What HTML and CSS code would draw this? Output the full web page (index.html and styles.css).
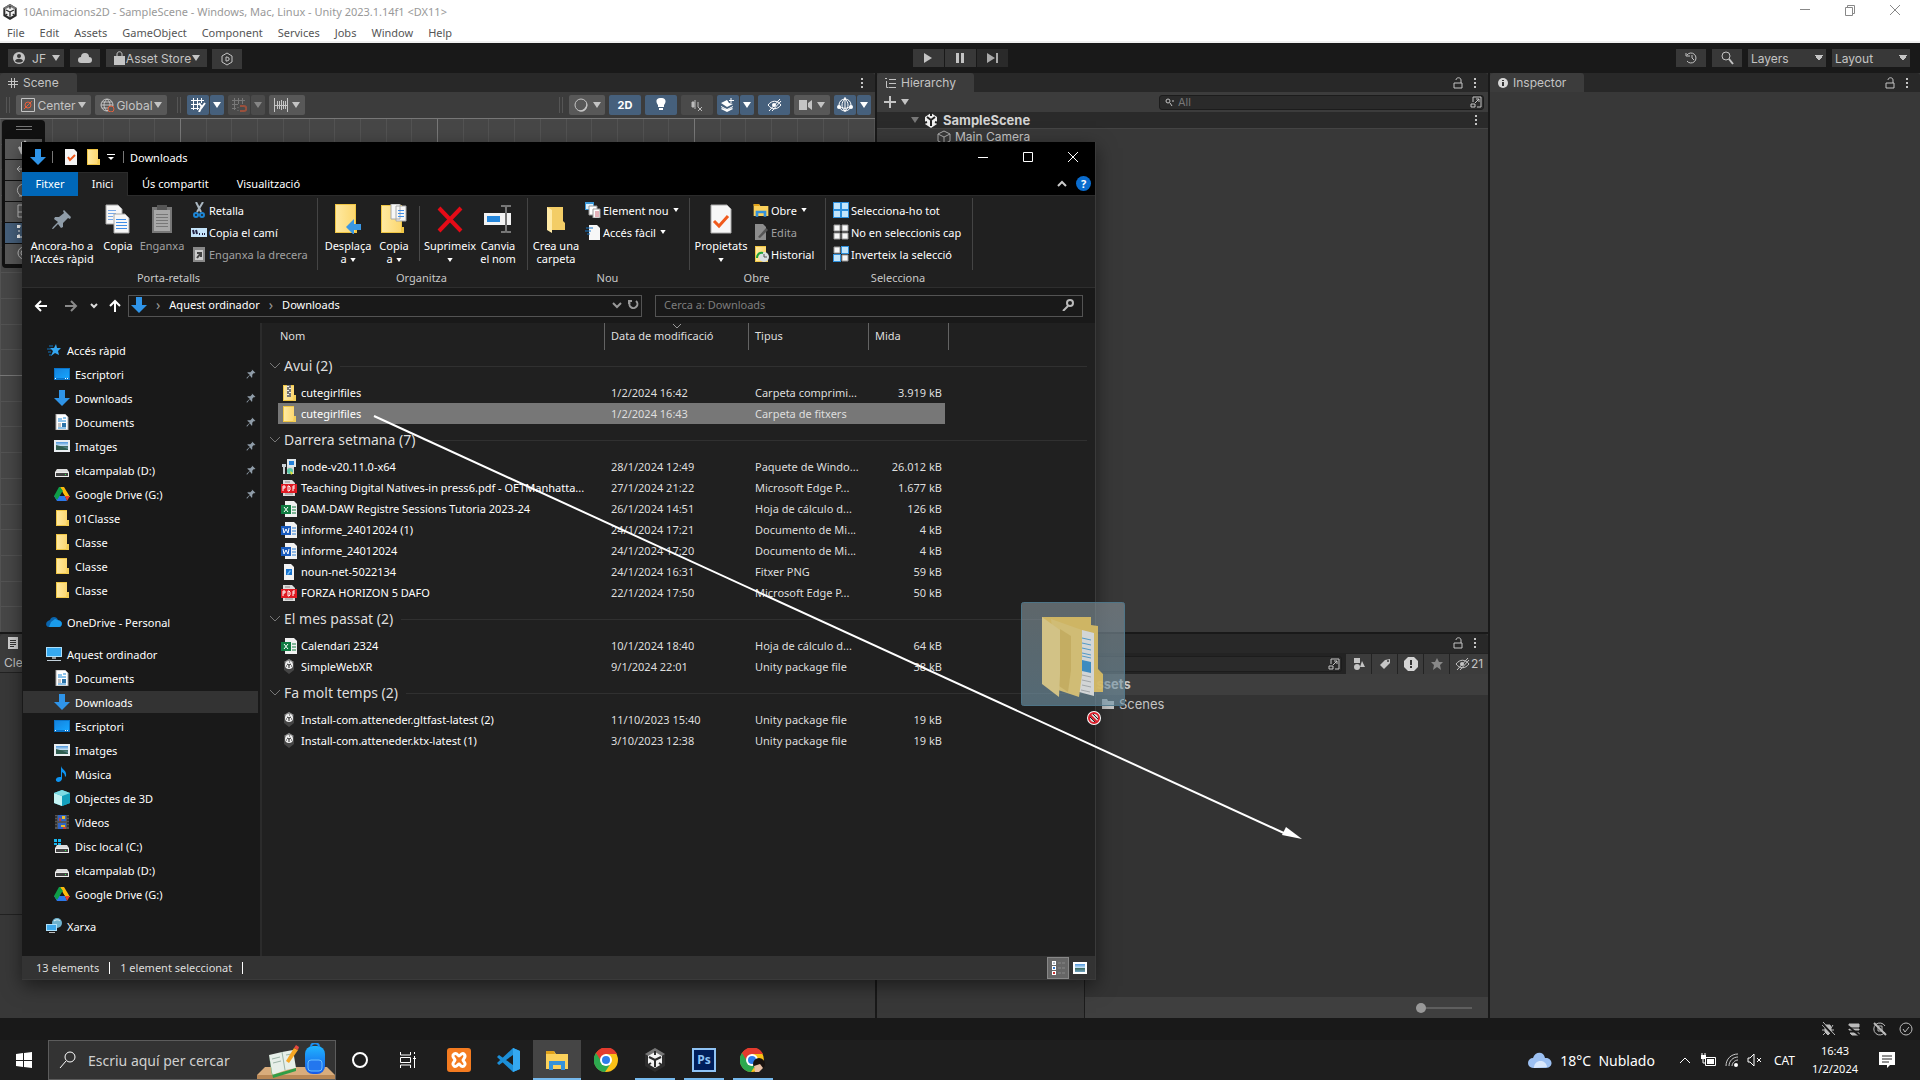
FILE: index.html
```html
<!DOCTYPE html>
<html lang="ca">
<head>
    <meta charset="UTF-8">
    <meta name="viewport" content="width=device-width, initial-scale=1.0">
    <title>Unity - Downloads</title>
    <link rel="stylesheet" href="styles.css">
</head>
<body>
    <!-- icones compartides -->
    <svg class="sprite" aria-hidden="true">
        <defs>
            <linearGradient id="gFolder" x1="0" x2="1"><stop offset="0" stop-color="#ffe9a0"/><stop offset="1" stop-color="#fcd770"/></linearGradient>
            <linearGradient id="gBlue" x1="0" y1="0" x2="1" y2="1"><stop offset="0" stop-color="#1583dd"/><stop offset="1" stop-color="#15a5ff"/></linearGradient>
            <linearGradient id="gSky" x1="0" y1="0" x2="0" y2="1"><stop offset="0" stop-color="#4e96dc"/><stop offset=".5" stop-color="#cfe6f5"/><stop offset=".55" stop-color="#3f6d63"/><stop offset="1" stop-color="#6fa3c4"/></linearGradient>
            <linearGradient id="gPack" x1="0" y1="0" x2="0" y2="1"><stop offset="0" stop-color="#20b4ff"/><stop offset="1" stop-color="#1558e8"/></linearGradient>
        </defs>
        <symbol id="down" viewBox="0 0 16 16"><path d="M5 0h6v8h5l-8 8-8-8h5z" fill="#2f94e8"/></symbol>
        <symbol id="folder" viewBox="0 0 16 16"><path d="M2 0h11v11h2v5H2z" fill="#f0c645"/><path d="M3 1h10v14H3z" fill="url(#gFolder)"/><path d="M13 10h2v6h-3z" fill="#f3cd57"/></symbol>
        <symbol id="zip" viewBox="0 0 16 16"><use href="#folder"/><path d="M6 0h4v12H6z" fill="#777"/><path d="M6 1h2v1H6zm2 2h2v1H8zM6 5h2v1H6zm2 2h2v1H8zM6 9h2v1H6z" fill="#eee"/></symbol>
        <symbol id="docIcon" viewBox="0 0 16 16"><path d="M2 0h9l3 3v13H2z" fill="#fff" stroke="#aaa"/><path d="M4 5h4M9 4h3M4 7h8M4 14h8" stroke="#1b87d6"/><path d="M4 10h3M4 12h3" stroke="#888"/><path d="M8 9h4v4H8z" fill="#2c73a8"/></symbol>
        <symbol id="pic" viewBox="0 0 16 16"><path d="M0 2h16v12H0z" fill="#e9eef2"/><path d="M2 4h12v8H2z" fill="url(#gSky)"/><path d="M2 7l4 1 8 3v1H2z" fill="#2f5d50"/></symbol>
        <symbol id="desk" viewBox="0 0 16 16"><path d="M0 2h16v12H0z" fill="#0a74c9"/><path d="M1 3h14v9H1z" fill="url(#gBlue)"/><path d="M1 12h1v1H1zm10 0h1v1h-1zm2 0h1v1h-1z" fill="#fff"/></symbol>
        <symbol id="drive" viewBox="0 0 16 16"><path d="M3 7h10l2 3H1z" fill="#dcdcdc"/><path d="M1 10h14v5H1z" fill="#ededed"/><path d="M2 11h12v3H2z" fill="#444"/><path d="M11 12h1v1h-1z" fill="#2ff04a"/></symbol>
        <symbol id="driveC" viewBox="0 0 16 16"><use href="#drive"/><path d="M0 1h3v3H0zm4 0h3v3H4zM0 5h3v2H0zm4 0h3v2H4z" fill="#16b6ee"/></symbol>
        <symbol id="gdrive" viewBox="0 0 16 16"><path d="M6 1h4l6 10h-5z" fill="#fdbb0c"/><path d="M5 10h6l-2 5H3L0 10z" fill="#2c78ea"/><path d="M0 10L5 1h1l3 4-6 9z" fill="#0f9d48"/><path d="M3 15l3-5h5l2 5z" fill="#2c78ea"/><path d="M11 10h5l-3 5z" fill="#e8402f"/><path d="M6 10h5L8 6z" fill="#191919"/></symbol>
        <symbol id="pin" viewBox="0 0 16 16"><path d="M10 1l5 5-1 1-1-1-3 3v4l-1 1-3-4-4 5H1v-1l5-5-4-3 1-1h4l3-3-1-1z" fill="#8f9ca8"/></symbol>
        <symbol id="music" viewBox="0 0 16 16"><path d="M7 0c1 4 6 4 5 10l-1 1c0-4-2-4-3-5v7c-1 4-7 4-6 0 1-2 3-2 5-2z" fill="#0d94f2"/></symbol>
        <symbol id="cube3" viewBox="0 0 16 16"><path d="M8 0l8 3v10l-8 3-8-3V3z" fill="#28b9cd"/><path d="M0 3l8 3v10l-8-3z" fill="#c4f3f3"/><path d="M8 6l8-3v10l-8 3z" fill="#12a0bd"/><path d="M8 0l8 3-8 3-8-3z" fill="#7ddbe4"/></symbol>
        <symbol id="video" viewBox="0 0 16 16"><path d="M1 1h14v14H1z" fill="#555"/><path d="M2 2v12M14 2v12" stroke="#111" stroke-dasharray="2 1"/><path d="M4 1h8v6H4zM4 9h8v6H4z" fill="#2f63c4"/><path d="M8 2h3v3H8zM7 11h4v2H7z" fill="#eabc2b"/><path d="M5 4h2v3H5zM9 13h3v2H9z" fill="#c13f3a"/></symbol>
        <symbol id="pc" viewBox="0 0 16 16"><path d="M0 1h16v10H0z" fill="#aee0fb"/><path d="M1 2h14v8H1z" fill="#36a9f0"/><path d="M6 11h4v2H6z" fill="#999"/><path d="M1 14h14v1H1z" fill="#c4d2dc"/></symbol>
        <symbol id="net" viewBox="0 0 16 16"><circle cx="11" cy="5" r="5" fill="#6fb3cf"/><path d="M8 3c3-2 5-1 6 0" stroke="#e6f7fb" fill="none"/><path d="M0 6h11v7H0z" fill="#aee0fb"/><path d="M1 7h9v5H1z" fill="#3fa9ea"/><path d="M3 14h6v1H3z" fill="#bbb"/></symbol>
        <symbol id="star" viewBox="0 0 16 16"><path d="M10 2l1 4h4l-3 3 1 4-4-2-4 3 2-5-3-3h4z" fill="#34a7f2"/><path d="M3 4h4M1 7h4M2 10h3M3 13h3" stroke="#1175bd"/></symbol>
        <symbol id="onedrive" viewBox="0 0 16 16"><path d="M4 6c1-4 7-4 8 0 5 0 5 7 1 7H3c-4 0-4-6 1-7z" fill="#0a64ad"/><path d="M5 8l4-3 5 2c3 1 2 6-1 6H3z" fill="#1a9bea"/></symbol>
        <symbol id="unityPkg" viewBox="0 0 16 16"><path d="M8 0l5 3v8l-5 4-5-4V3z" fill="#454545"/><path d="M8 0l5 3-5 2-5-2z" fill="#8d8d8d"/><circle cx="8" cy="6" r="4" fill="#eee"/><path d="M8 6v3M8 6L6 5M8 6l2-1" stroke="#222"/><path d="M5 7h1M10 7h1M8 3h1" stroke="#333"/></symbol>
        <symbol id="pdf" viewBox="0 0 16 16"><path d="M2 0h9l3 3v13H2z" fill="#ddd"/><path d="M4 2h5M4 14h8" stroke="#888"/><path d="M0 4h16v9H0z" fill="#df1a22"/><path d="M2 11V6h2v2H2M7 6v5h1l1-1V7L8 6zM12 11V6h2M12 8h2" stroke="#fff" fill="none"/></symbol>
        <symbol id="xls" viewBox="0 0 16 16"><path d="M4 0h9l3 3v13H4z" fill="#f1f1f1"/><path d="M11 6h4M11 9h4M11 12h4" stroke="#107c41"/><path d="M0 4h10v9H0z" fill="#107c41"/><path d="M3 6l4 5M7 6l-4 5" stroke="#fff"/></symbol>
        <symbol id="docx" viewBox="0 0 16 16"><path d="M4 0h9l3 3v13H4z" fill="#f1f1f1"/><path d="M11 6h4M11 9h4M11 12h4" stroke="#2b7cd3"/><path d="M0 4h10v9H0z" fill="#185abd"/><path d="M2 6l1 5 2-4 2 4 1-5" stroke="#fff" fill="none"/></symbol>
        <symbol id="msi" viewBox="0 0 16 16"><path d="M6 0h9v8H6z" fill="#dfe6ea"/><path d="M8 2h5v4H8z" fill="#2380d8"/><path d="M1 5h4v3H4v7H2V8H1z" fill="#c9d0d4"/><path d="M6 8h7v7H6z" fill="#d8d8d8"/><circle cx="9" cy="12" r="3" fill="#58c5a5"/><path d="M9 12l3 2-2 2z" fill="#e8e32c"/></symbol>
        <symbol id="png" viewBox="0 0 16 16"><path d="M3 0h7l3 3v13H3z" fill="#f3f3f3"/><path d="M5 5h6v6H5z" fill="#1673cf"/><path d="M6 10l3-4 1 1-3 4z" fill="#7cc0f5"/></symbol>
        <symbol id="tri" viewBox="0 0 8 6"><path d="M0 0h8L4 6z" fill="currentColor"/></symbol>
        <symbol id="lock" viewBox="0 0 10 12"><path d="M1 6h8v5H1zM3 3c0-3 5-3 5 0v3" fill="none" stroke="#c4c4c4"/></symbol>
        <symbol id="dots" viewBox="0 0 4 12"><path d="M1 1h2v2H1zm0 4h2v2H1zm0 4h2v2H1z" fill="#c4c4c4"/></symbol>
        <symbol id="popout" viewBox="0 0 12 12"><path d="M3 6V1h8v10H7M1 8h4v3H1zM5 7l4-4M6 3h3v3" fill="none" stroke="#c4c4c4"/></symbol>
        <symbol id="unity" viewBox="0 0 24 24"><path d="M12 0l10 6v12l-10 6-10-6V6z" fill="#2d2d2d"/><path d="M12 0l10 6-10 6L2 6z" fill="#777"/><path d="M12 4l7 4v8l-7 4-7-4V8z" fill="#f4f4f4"/><path d="M12 12v7M12 12L6 9M12 12l6-3" stroke="#2d2d2d" stroke-width="2"/><path d="M12 3v4M5 17l3-2M19 17l-3-2" stroke="#2d2d2d" stroke-width="2"/></symbol>
        <symbol id="chrome" viewBox="0 0 24 24"><circle cx="12" cy="12" r="12" fill="#fbc116"/><path d="M12 12L2 5a12 12 0 0 0 9 19l6-9z" fill="#2da94f"/><path d="M12 6h11a12 12 0 0 0-21-1l5 8z" fill="#e33b2e"/><circle cx="12" cy="12" r="6" fill="#fff"/><circle cx="12" cy="12" r="4" fill="#2e7de9"/></symbol>
        <symbol id="explorer" viewBox="0 0 24 24"><path d="M1 3h8l2 3h12v15H1z" fill="#fbd15b"/><path d="M1 3h8l1 3H1z" fill="#e0a21b"/><path d="M4 13h16v9h-4v-5H8v5H4z" fill="#3592da"/></symbol>
    </svg>

    <div class="unity">
        <header class="titlebar">
            <svg class="i16"><use href="#unity"/></svg>
            <span class="app-title">10Animacions2D - SampleScene - Windows, Mac, Linux - Unity 2023.1.14f1 &lt;DX11&gt;</span>
            <div class="win-buttons">
                <button aria-label="Minimitza"><svg width="12" height="12"><path d="M1 5.500h10" stroke="#888"/></svg></button>
                <button aria-label="Restaura"><svg width="12" height="12"><path d="M1.500 3.500h7v8h-7zM3.500 3V1.500h7v8H9" fill="none" stroke="#888"/></svg></button>
                <button aria-label="Tanca"><svg width="12" height="12"><path d="M1 1l10 10M11 1L1 11" stroke="#888"/></svg></button>
            </div>
        </header>
        <nav class="menubar">
            <a href="#">File</a><a href="#">Edit</a><a href="#">Assets</a><a href="#">GameObject</a><a href="#">Component</a><a href="#">Services</a><a href="#">Jobs</a><a href="#">Window</a><a href="#">Help</a>
        </nav>

        <div class="main-toolbar">
            <div class="tool-group">
                <button class="ubtn account"><svg width="14" height="14"><circle cx="7" cy="7" r="6" fill="#c4c4c4"/><circle cx="7" cy="5" r="2" fill="#383838"/><path d="M3 10c1-3 7-3 8 0-2 2-6 2-8 0z" fill="#383838"/></svg>JF<svg class="tri"><use href="#tri"/></svg></button>
                <button class="ubtn cloud" aria-label="Cloud"><svg width="16" height="12"><path d="M4 11a3 3 0 0 1 0-6 4 4 0 0 1 8 0 3 3 0 0 1 0 6z" fill="#c4c4c4"/></svg></button>
                <button class="ubtn store"><svg width="12" height="14"><path d="M1 5h11v9H1z" fill="#c4c4c4"/><path d="M4 6V3c0-3 5-3 5 0v3" fill="none" stroke="#c4c4c4"/></svg>Asset Store<svg class="tri"><use href="#tri"/></svg></button>
                <button class="ubtn cloud hex" aria-label="Package"><svg width="14" height="14"><path d="M7 1l5 3v6l-5 3-5-3V4zM6 5v4h1l2-1V6L7 5z" fill="none" stroke="#c4c4c4"/></svg></button>
            </div>
            <div class="tool-group play">
                <button class="ubtn" aria-label="Play"><svg width="10" height="12"><path d="M1 1l8 5-8 5z" fill="#c4c4c4"/></svg></button>
                <button class="ubtn" aria-label="Pause"><svg width="10" height="12"><path d="M1 1h3v10H1zM6 1h3v10H6z" fill="#c4c4c4"/></svg></button>
                <button class="ubtn step" aria-label="Step"><svg width="11" height="12"><path d="M0 1l8 5-8 5zM9 1h2v10H9z" fill="#aaa"/></svg></button>
            </div>
            <div class="tool-group end">
                <button class="ubtn cloud" aria-label="History"><svg width="14" height="14"><path d="M3 4a5 5 0 1 1 0 6M2 2v3h4M8 4v3l2 2" fill="none" stroke="#c4c4c4"/></svg></button>
                <button class="ubtn cloud" aria-label="Search"><svg width="14" height="14"><circle cx="6" cy="5" r="4" fill="none" stroke="#c4c4c4"/><path d="M9 8l4 5" stroke="#c4c4c4" stroke-width="2"/></svg></button>
                <select class="uselect" aria-label="Layers"><option>Layers</option></select>
                <select class="uselect" aria-label="Layout"><option>Layout</option></select>
            </div>
        </div>

        <div class="docks">
            <div class="dock-col">
                <section class="dock scene">
                    <div class="tabs"><h2 class="tab"><svg width="10" height="12"><path d="M3.500 1v10M6.500 1v10M0 4.500h10M0 7.500h10" stroke="#c4c4c4"/></svg>Scene</h2><span class="tab-tools"><svg class="dots"><use href="#dots"/></svg></span></div>
                    <div class="scene-tools">
                        <i class="grip"></i>
                        <button class="sbtn w75"><svg width="14" height="14"><path d="M.500.500h13v13H.500z" fill="none" stroke="#c4c4c4"/><circle cx="7" cy="7" r="3" fill="none" stroke="#e8613c"/><path d="M3 11l8-8" stroke="#e8613c"/></svg>Center<svg class="tri"><use href="#tri"/></svg></button>
                        <button class="sbtn w72"><svg width="15" height="14"><circle cx="7" cy="7" r="6" fill="none" stroke="#c4c4c4"/><path d="M7 1c-4 4-4 8 0 12M7 1c4 4 4 8 0 12M1 7h12M2 4h10M2 10h10" fill="none" stroke="#c4c4c4"/><circle cx="11" cy="11" r="3" fill="#585858" stroke="#e8613c"/></svg>Global<svg class="tri"><use href="#tri"/></svg></button>
                        <i class="grip far"></i>
                        <span class="split"><button class="sbtn on" aria-label="Grid"><svg width="15" height="14"><path d="M2.500 0v12M6.500 0v12M10.500 0v5M0 2.500h13M0 6.500h8M0 10.500h8" stroke="#fff" fill="none"/><path d="M8 5l3 4 3-4M11 8l-3 6" stroke="#fff" stroke-width="2" fill="none"/></svg></button><button class="sbtn on thin" aria-label="Grid options"><svg class="tri"><use href="#tri"/></svg></button></span>
                        <span class="split dim"><button class="sbtn" aria-label="Snap"><svg width="15" height="14"><path d="M2.500 0v12M6.500 0v6M10.500 0v6M0 2.500h13M0 6.500h6M0 10.500h4M6 9v1M6 12v1" stroke="#aaa" fill="none"/><path d="M8 8h4c3 0 3 5 0 5H8" stroke="#e8613c" stroke-width="2" fill="none"/></svg></button><button class="sbtn thin" aria-label="Snap options"><svg class="tri"><use href="#tri"/></svg></button></span>
                        <button class="sbtn w36" aria-label="Increment"><svg width="14" height="14"><path d="M.500 0v14M13.500 0v14M1 7.500h12M3.500 3v8M5.500 3v8M7.500 2v10M9.500 3v8M11.500 3v8" stroke="#c4c4c4"/></svg><svg class="tri"><use href="#tri"/></svg></button>
                        <div class="scene-right">
                            <i class="grip"></i>
                            <button class="sbtn w36" aria-label="Draw mode"><svg width="15" height="15"><circle cx="7" cy="7" r="6" fill="none" stroke="#c4c4c4"/><path d="M3 12a7 7 0 0 0 9-9c4 6-2 14-9 9z" fill="#c4c4c4"/></svg><svg class="tri"><use href="#tri"/></svg></button>
                            <button class="sbtn on w32 bold">2D</button>
                            <button class="sbtn on w32" aria-label="Light"><svg width="10" height="14"><path d="M5 0c6 0 5 5 3 7v2H2V7C0 5-1 0 5 0zM3 10h4v2H3z" fill="#fff"/></svg></button>
                            <button class="sbtn w32 dimmed" aria-label="Audio"><svg width="12" height="12"><path d="M1 3h2v5H1zM4 1v9M7 3v5M7 8l4 4M11 8l-4 4" stroke="#bbb" fill="#bbb"/></svg></button>
                            <span class="split"><button class="sbtn on" aria-label="Effects"><svg width="14" height="14"><path d="M0 5l6-3 2 3 4 1-6 3zM0 8l6 3 6-3v1l-6 3-6-3zM0 11l6 3 6-3-1-1-5 2-5-2z" fill="#fff"/><path d="M10 0v5M8 2.500h5" stroke="#fff"/></svg></button><button class="sbtn on thin" aria-label="Effects options"><svg class="tri"><use href="#tri"/></svg></button></span>
                            <button class="sbtn on w32" aria-label="Hidden"><svg width="15" height="12"><path d="M1 6c4-5 9-5 13 0-4 5-9 5-13 0zM2 12L13 0M5 12L14 2" fill="none" stroke="#fff"/><circle cx="7" cy="6" r="2" fill="#fff"/></svg></button>
                            <button class="sbtn w36" aria-label="Camera"><svg width="14" height="10"><path d="M0 0h8v10H0zM9 3l4-3v10L9 7z" fill="#c4c4c4"/></svg><svg class="tri"><use href="#tri"/></svg></button>
                            <span class="split"><button class="sbtn on" aria-label="Gizmos"><svg width="16" height="16"><circle cx="8" cy="8" r="6" fill="none" stroke="#fff"/><path d="M8 0v15M2 9c3 3 9 3 12 0M8 2C4 5 4 11 8 14M8 2c4 3 4 9 0 12" fill="none" stroke="#fff"/><circle cx="8" cy="2" r="1" fill="#fff"/><circle cx="2" cy="10" r="2" fill="#fff"/><circle cx="14" cy="10" r="2" fill="#fff"/></svg></button><button class="sbtn on thin" aria-label="Gizmos options"><svg class="tri"><use href="#tri"/></svg></button></span>
                        </div>
                    </div>
                    <div class="scene-view">
                        <svg class="grid-lines" width="100%" height="100%">
                            <defs><pattern id="grid" x="180" y="256" width="257" height="257" patternUnits="userSpaceOnUse">
                                <path d="M26.500 0v257M51.500 0v257M77.500 0v257M103.500 0v257M129.500 0v257M154.500 0v257M180.500 0v257M206.500 0v257M231.500 0v257M0 26.500h257M0 51.500h257M0 77.500h257M0 103.500h257M0 129.500h257M0 154.500h257M0 180.500h257M0 206.500h257M0 231.500h257" stroke="#535353"/>
                                <path d="M.500 0v257M0 .500h257" stroke="#787878"/>
                            </pattern></defs>
                            <rect width="100%" height="100%" fill="url(#grid)"/>
                        </svg>
                        <div class="tool-palette">
                            <i></i>
                            <button aria-label="Hand"><svg width="20" height="16"><path d="M8 14L5 7l3 3V2l2 6 1-7 2 7" stroke="#c4c4c4" stroke-width="2" fill="none"/></svg></button>
                            <button aria-label="Move"><svg width="20" height="16"><path d="M3 8h14M6 5L3 8l3 3M10 1v14" stroke="#c4c4c4" fill="none"/></svg></button>
                            <button aria-label="Rotate"><svg width="20" height="16"><path d="M8 14a6 6 0 1 1 6-2M5 14h4v-4" stroke="#c4c4c4" fill="none"/></svg></button>
                            <button aria-label="Scale"><svg width="20" height="16"><path d="M4 2h12v12H4zM4 9h6v5" stroke="#c4c4c4" fill="none"/></svg></button>
                            <button class="on" aria-label="Rect"><svg width="20" height="16"><path d="M5 2h10v11H5z" stroke="#fff" fill="none" stroke-dasharray="2 2"/><path d="M3 1h3v3H3zM3 11h3v3H3z" fill="#fff"/></svg></button>
                            <button aria-label="Transform"><svg width="20" height="16"><circle cx="10" cy="8" r="6" stroke="#c4c4c4" fill="none"/><circle cx="10" cy="8" r="3" stroke="#c4c4c4" fill="none"/></svg></button>
                        </div>
                    </div>
                </section>
                <section class="dock console">
                    <div class="tabs"><h2 class="tab narrow"><svg width="10" height="12"><path d="M0 0h10v12H0z" fill="#d0d0d0"/><path d="M2 3.500h6M2 5.500h6M2 7.500h6M2 9.500h4" stroke="#333"/></svg></h2></div>
                    <div class="console-tools"><button>Clear</button></div>
                    <div class="console-list"></div>
                    <div class="console-detail"></div>
                </section>
            </div>

            <div class="dock-col">
                <section class="dock hierarchy">
                    <div class="tabs"><h2 class="tab"><svg width="11" height="12"><path d="M0 1.500h2M4 2.500h7M1.500 4v6.500h2M4 6.500h7M4 10.500h7" stroke="#c4c4c4" fill="none"/></svg>Hierarchy</h2><span class="tab-tools"><svg class="lock"><use href="#lock"/></svg><svg class="dots"><use href="#dots"/></svg></span></div>
                    <div class="search-row">
                        <button class="plus" aria-label="Add"><svg width="12" height="12"><path d="M6 0v12M0 6h12" stroke="#c4c4c4" stroke-width="2"/></svg><svg class="tri"><use href="#tri"/></svg></button>
                        <label class="usearch"><svg width="10" height="10"><circle cx="4" cy="4" r="2" fill="none" stroke="#c4c4c4"/><path d="M6 6l2 3M8 4h2" stroke="#c4c4c4"/></svg><input type="text" placeholder="All" aria-label="Search hierarchy"><svg class="pop"><use href="#popout"/></svg></label>
                    </div>
                    <div class="tree-root"><svg class="tri gray"><use href="#tri"/></svg><svg width="14" height="16"><path d="M7 1l6 4v7l-6 4-6-4V5z" fill="#f0f0f0"/><path d="M7 8v6M7 8L3 5M7 8l4-3M7 0v4M0 11l3-1M14 11l-3-1" stroke="#222" stroke-width="2"/></svg><b>SampleScene</b><svg class="dots"><use href="#dots"/></svg></div>
                    <div class="tree-item"><svg width="14" height="14"><path d="M7 1l6 3v7l-6 3-6-3V4zM1 4l6 3 6-3M7 7v7" fill="none" stroke="#aaa"/></svg>Main Camera</div>
                </section>
                <section class="dock project">
                    <div class="tabs"><span class="tab-tools"><svg class="lock"><use href="#lock"/></svg><svg class="dots"><use href="#dots"/></svg></span></div>
                    <div class="project-tools">
                        <label class="usearch"><input type="text" aria-label="Search project"><svg class="pop"><use href="#popout"/></svg></label>
                        <button aria-label="By type"><svg width="12" height="14"><path d="M1 1h6v5H1zM12 10L9 4 7 10z" fill="#c4c4c4"/><circle cx="4" cy="10" r="3" fill="#c4c4c4"/></svg></button>
                        <button aria-label="By label"><svg width="12" height="12"><path d="M1 7l5-5 5-1v4l-6 6z" fill="#c4c4c4"/><circle cx="9" cy="3" r="1" fill="#383838"/></svg></button>
                        <button aria-label="Log"><svg width="14" height="14"><path d="M4 0h6l4 4v6l-4 4H4l-4-4V4z" fill="#d4d4d4"/><path d="M7 3v5M7 9v2" stroke="#333" stroke-width="2"/></svg></button>
                        <button aria-label="Favorite"><svg width="12" height="12"><path d="M6 0l2 4h4L9 7l1 5-4-3-4 3 1-5-3-3h4z" fill="#888"/></svg></button>
                        <button class="count"><svg width="15" height="12"><path d="M1 6c4-5 9-5 13 0-4 5-9 5-13 0zM2 12L13 0M5 12L14 2" fill="none" stroke="#c4c4c4"/><circle cx="7" cy="6" r="2" fill="#c4c4c4"/></svg>21</button>
                    </div>
                    <div class="project-body">
                        <div class="project-left"></div>
                        <div class="project-right">
                            <div class="crumb">Assets</div>
                            <div class="asset"><svg width="12" height="10"><path d="M0 0h5l1 2h6v8H0z" fill="#c4c4c4"/></svg>Scenes</div>
                            <div class="zoombar"><input type="range" min="0" max="100" value="0" aria-label="Icon size"></div>
                        </div>
                    </div>
                </section>
            </div>

            <div class="dock-col">
                <section class="dock inspector">
                    <div class="tabs"><h2 class="tab"><svg width="10" height="12"><circle cx="5" cy="6" r="5" fill="#d8d8d8"/><path d="M5 3v1M5 5v4" stroke="#333" stroke-width="2"/></svg>Inspector</h2><span class="tab-tools"><svg class="lock"><use href="#lock"/></svg><svg class="dots"><use href="#dots"/></svg></span></div>
                </section>
            </div>
        </div>

        <footer class="unity-status">
            <svg width="14" height="14"><path d="M5 3h4l1 3v4l-3 3-3-3V6zM1 3l3 3M1 8h3M2 13l3-3M12 3l-2 3M13 8h-3M12 13l-2-3" stroke="#bbb" fill="#bbb"/><path d="M1 1l12 13" stroke="#191919" stroke-width="2"/><path d="M2 0l12 13" stroke="#bbb"/></svg>
            <svg width="14" height="14"><path d="M2 2h10v3H2zM2 7h10v1H2zM3 11h9v2H5z" stroke="#bbb" fill="#bbb"/><path d="M1 4l12 10" stroke="#191919" stroke-width="2"/></svg>
            <svg width="14" height="14"><path d="M12 4a6 6 0 1 0 0 6M5 4h4v5H5z" stroke="#bbb" fill="none"/><path d="M1 1l12 12" stroke="#bbb" stroke-width="2"/></svg>
            <svg width="14" height="14"><circle cx="7" cy="7" r="6" stroke="#bbb" fill="none"/><path d="M4 7l2 3 4-5" stroke="#bbb" fill="none"/></svg>
        </footer>
    </div>

    <!-- finestra de l'explorador -->
    <div class="explorer">
        <header class="ex-title">
            <svg class="i16"><use href="#down"/></svg><i class="bar first"></i>
            <svg class="i16"><path d="M2 0h9l3 3v13H2z" fill="#f4f4f4"/><path d="M5 8l2 3 5-5" stroke="#f05a1c" stroke-width="2" fill="none"/></svg>
            <svg class="i16"><use href="#folder"/></svg>
            <svg class="quick" width="8" height="8"><path d="M0 1.500h8" stroke="#fff"/><path d="M1 4h6L4 7z" fill="#fff"/></svg><i class="bar"></i>
            <span>Downloads</span>
            <div class="win-buttons">
                <button aria-label="Minimitza"><svg width="12" height="12"><path d="M1 6.500h10" stroke="#fff"/></svg></button>
                <button aria-label="Maximitza"><svg width="12" height="12"><path d="M1.500 1.500h9v9h-9z" fill="none" stroke="#fff"/></svg></button>
                <button aria-label="Tanca"><svg width="12" height="12"><path d="M1 1l10 10M11 1L1 11" stroke="#fff"/></svg></button>
            </div>
        </header>
        <nav class="ex-tabs">
            <button class="file">Fitxer</button><button class="active">Inici</button><button>Ús compartit</button><button>Visualització</button>
            <span class="ex-help"><svg width="10" height="8"><path d="M1 6l4-4 4 4" stroke="#ccc" stroke-width="2" fill="none"/></svg><button aria-label="Ajuda">?</button></span>
        </nav>

        <div class="ribbon">
            <div class="rgroup g1">
                <div class="ritems">
                    <button class="big b74"><svg width="28" height="30"><path d="M16 6l7 7-1 2-2-1-5 5v4l-2 1-3-4-5 5H4l1-2 5-5-4-3 1-2h4l5-4-1-2z" fill="#8f9ca8"/></svg><span>Ancora-ho a</span><span>l'Accés ràpid</span></button>
                    <button class="big b38"><svg width="26" height="30"><path d="M1 1h12l4 4v15H1z" fill="#f7f7f7" stroke="#aaa"/><path d="M3 6.500h8M3 9.500h8M3 12.500h5M3 15.500h5" stroke="#78a9e8"/><path d="M9 10h11l4 4v15H9z" fill="#f7f7f7" stroke="#aaa"/><path d="M11 15.500h10M11 18.500h11M11 21.500h11M11 24.500h11" stroke="#3e8de8"/></svg><span>Copia</span></button>
                    <button class="big b50 off"><svg width="22" height="30"><path d="M1 3h20v26H1z" fill="#777"/><path d="M3 6h16v21H3z" fill="#a8a8a8"/><path d="M6 1h10v5H6z" fill="#555"/><path d="M5 10.500h12M5 13.500h12M5 16.500h12M5 19.500h12M5 22.500h12" stroke="#777"/></svg><span>Enganxa</span></button>
                    <div class="small-col">
                        <button><svg class="i16"><path d="M5 0l5 10M12 0L6 10" stroke="#a9b6c0" stroke-width="2"/><circle cx="5" cy="13" r="2" fill="none" stroke="#1c86d6" stroke-width="2"/><circle cx="11" cy="13" r="2" fill="none" stroke="#1c86d6" stroke-width="2"/></svg>Retalla</button>
                        <button><svg class="i16"><path d="M0 4h16v9H0z" fill="#c5e4fa"/><path d="M2 6l1 4M5 6l1 4M8 10h1M11 10h1M13 10h1" stroke="#224" stroke-width="2"/></svg>Copia el camí</button>
                        <button class="off"><svg class="i16"><path d="M2 1h12v15H2z" fill="#888"/><path d="M4 4h8v10H4z" fill="#ccc"/><path d="M6 12l4-5M6 7h4v4" stroke="#444" stroke-width="2" fill="none"/></svg>Enganxa la drecera</button>
                    </div>
                </div>
                <p>Porta-retalls</p>
            </div>
            <div class="rgroup g2">
                <div class="ritems">
                    <button class="big b54"><svg width="28" height="30"><path d="M1 0h21v23h1v6H1z" fill="#f0c645"/><path d="M2 1h19v27H2z" fill="url(#gFolder)"/><path d="M12 23l8-8v5h7v6h-7v5z" fill="#3a97e4"/></svg><span>Desplaça</span><span>a <svg class="rt"><use href="#tri"/></svg></span></button>
                    <button class="big b38"><svg width="28" height="30"><path d="M1 1h21v22h2v6H1z" fill="#f0c645"/><path d="M2 2h19v26H2z" fill="url(#gFolder)"/><path d="M11 0h9v15h-9zM16 2h10v15H16z" fill="#f7f7f7" stroke="#aaa"/><path d="M18 6.500h6M18 9.500h6M18 12.500h6" stroke="#3e8de8"/></svg><span>Copia</span><span>a <svg class="rt"><use href="#tri"/></svg></span></button>
                    <i class="rsep"></i>
                    <button class="big b52"><svg width="28" height="30"><path d="M3 4l22 23M25 4L3 27" stroke="#e50b17" stroke-width="4"/></svg><span>Suprimeix</span><span><svg class="rt"><use href="#tri"/></svg></span></button>
                    <button class="big b44"><svg width="30" height="30"><path d="M1 9h27v12H1z" fill="#f3f3f3"/><path d="M4 12h13v6H4z" fill="#2587dc"/><path d="M23 3v24M18 2h4l1 1 1-1h4M18 28h4l1-1 1 1h4" stroke="#777" stroke-width="2" fill="none"/></svg><span>Canvia</span><span>el nom</span></button>
                </div>
                <p>Organitza</p>
            </div>
            <div class="rgroup g3">
                <div class="ritems">
                    <button class="big b50"><svg width="22" height="30"><path d="M2 3h16v14l2 2v7H2z" fill="#f3cd66"/><path d="M2 3l5 3v23l-5-3z" fill="#ffeaa6"/></svg><span>Crea una</span><span>carpeta</span></button>
                    <div class="small-col">
                        <button><svg class="i16"><path d="M0 0h9v8H0z" fill="#3a97d8"/><path d="M1 2h7v5H1z" fill="#dff1fb"/><path d="M4 4h8v9H4z" fill="#fff" stroke="#999"/><path d="M8 7h7v9H8z" fill="#fff" stroke="#999"/><path d="M10 10h4M10 12h4M10 14h4" stroke="#c67"/></svg>Element nou<svg class="rt"><use href="#tri"/></svg></button>
                        <button><svg class="i16"><path d="M4 1h8l3 3v12H4z" fill="#f7f7f7"/><path d="M1 4h7M0 7h6M2 10h3" stroke="#1979ca"/></svg>Accés fàcil<svg class="rt"><use href="#tri"/></svg></button>
                    </div>
                </div>
                <p>Nou</p>
            </div>
            <div class="rgroup g4">
                <div class="ritems">
                    <button class="big b56"><svg width="22" height="30"><path d="M1 1h16l4 4v24H1z" fill="#f7f7f7" stroke="#aaa"/><path d="M4 17l5 5 9-10" stroke="#f05a1c" stroke-width="3" fill="none"/></svg><span>Propietats</span><span><svg class="rt"><use href="#tri"/></svg></span></button>
                    <div class="small-col">
                        <button><svg class="i16"><use href="#explorer"/></svg>Obre<svg class="rt"><use href="#tri"/></svg></button>
                        <button class="off"><svg class="i16"><path d="M2 0h8l3 3v13H2z" fill="#8d8d8d"/><path d="M5 13l8-9 2 2-8 8z" fill="#555"/></svg>Edita</button>
                        <button><svg class="i16"><use href="#folder"/><circle cx="11" cy="11" r="5" fill="#d8e0e4"/><path d="M11 8v3h3" stroke="#555" fill="none"/><path d="M4 12c0-4 3-6 6-5" stroke="#1ea53a" stroke-width="2" fill="none"/></svg>Historial</button>
                    </div>
                </div>
                <p>Obre</p>
            </div>
            <div class="rgroup g5">
                <div class="ritems">
                    <div class="small-col">
                        <button><svg class="i16"><path d="M0 0h16v16H0z" fill="#2d8fdc"/><path d="M1 1h6v6H1zM9 1h6v6H9zM1 9h6v6H1zM9 9h6v6H9z" fill="#c2e5fb"/></svg>Selecciona-ho tot</button>
                        <button><svg class="i16"><path d="M1 1h6v6H1zM9 1h6v6H9zM1 9h6v6H1zM9 9h6v6H9z" fill="#f7f7f7" stroke="#999"/></svg>No en seleccionis cap</button>
                        <button><svg class="i16"><path d="M1 1h6v6H1zM9 9h6v6H9z" fill="#f7f7f7" stroke="#999"/><path d="M8 0h8v8H8zM0 8h8v8H0z" fill="#2d8fdc"/><path d="M9 1h6v6H9zM1 9h6v6H1z" fill="#c2e5fb"/></svg>Inverteix la selecció</button>
                    </div>
                </div>
                <p>Selecciona</p>
            </div>
        </div>

        <div class="address-row">
            <div class="arrows">
                <button aria-label="Enrere"><svg width="14" height="12"><path d="M13 6H2M7 1L2 6l5 5" stroke="#fff" stroke-width="2" fill="none"/></svg></button>
                <button class="fwd" aria-label="Endavant"><svg width="14" height="12"><path d="M1 6h11M7 1l5 5-5 5" stroke="#8a8a8a" stroke-width="2" fill="none"/></svg></button>
                <button class="mini" aria-label="Recents"><svg width="8" height="6"><path d="M1 1l3 3 3-3" stroke="#ddd" stroke-width="2" fill="none"/></svg></button>
                <button class="up" aria-label="Amunt"><svg width="12" height="14"><path d="M6 13V2M1 7l5-5 5 5" stroke="#fff" stroke-width="2" fill="none"/></svg></button>
            </div>
            <div class="address">
                <svg class="i16"><use href="#down"/></svg><span class="chev">›</span><a href="#">Aquest ordinador</a><span class="chev">›</span><a href="#">Downloads</a>
                <div class="address-end">
                    <svg width="10" height="8"><path d="M1 2l4 4 4-4" stroke="#999" stroke-width="2" fill="none"/></svg>
                    <svg width="12" height="12"><path d="M4 2H1v3M2 3a4 4 0 1 0 6-1" stroke="#999" stroke-width="2" fill="none"/></svg>
                </div>
            </div>
            <label class="ex-search"><input type="text" placeholder="Cerca a: Downloads" aria-label="Cerca"><svg width="12" height="12"><circle cx="8" cy="4" r="3" stroke="#bbb" stroke-width="2" fill="none"/><path d="M6 7l-5 5" stroke="#bbb" stroke-width="2"/></svg></label>
        </div>

        <div class="ex-body">
            <aside class="nav-pane">
                <ul>
                    <li class="top"><svg class="i16"><use href="#star"/></svg>Accés ràpid</li>
                    <li><svg class="i16"><use href="#desk"/></svg>Escriptori<svg class="pin"><use href="#pin"/></svg></li>
                    <li><svg class="i16"><use href="#down"/></svg>Downloads<svg class="pin"><use href="#pin"/></svg></li>
                    <li><svg class="i16"><use href="#docIcon"/></svg>Documents<svg class="pin"><use href="#pin"/></svg></li>
                    <li><svg class="i16"><use href="#pic"/></svg>Imatges<svg class="pin"><use href="#pin"/></svg></li>
                    <li><svg class="i16"><use href="#drive"/></svg>elcampalab (D:)<svg class="pin"><use href="#pin"/></svg></li>
                    <li><svg class="i16"><use href="#gdrive"/></svg>Google Drive (G:)<svg class="pin"><use href="#pin"/></svg></li>
                    <li><svg class="i16"><use href="#folder"/></svg>01Classe</li>
                    <li><svg class="i16"><use href="#folder"/></svg>Classe</li>
                    <li><svg class="i16"><use href="#folder"/></svg>Classe</li>
                    <li><svg class="i16"><use href="#folder"/></svg>Classe</li>
                </ul>
                <ul>
                    <li class="top"><svg class="i16"><use href="#onedrive"/></svg>OneDrive - Personal</li>
                </ul>
                <ul>
                    <li class="top"><svg class="i16"><use href="#pc"/></svg>Aquest ordinador</li>
                    <li><svg class="i16"><use href="#docIcon"/></svg>Documents</li>
                    <li class="current"><svg class="i16"><use href="#down"/></svg>Downloads</li>
                    <li><svg class="i16"><use href="#desk"/></svg>Escriptori</li>
                    <li><svg class="i16"><use href="#pic"/></svg>Imatges</li>
                    <li><svg class="i16"><use href="#music"/></svg>Música</li>
                    <li><svg class="i16"><use href="#cube3"/></svg>Objectes de 3D</li>
                    <li><svg class="i16"><use href="#video"/></svg>Vídeos</li>
                    <li><svg class="i16"><use href="#driveC"/></svg>Disc local (C:)</li>
                    <li><svg class="i16"><use href="#drive"/></svg>elcampalab (D:)</li>
                    <li><svg class="i16"><use href="#gdrive"/></svg>Google Drive (G:)</li>
                </ul>
                <ul>
                    <li class="top"><svg class="i16"><use href="#net"/></svg>Xarxa</li>
                </ul>
            </aside>
            <div class="list-pane">
                <table class="files">
                    <colgroup><col class="c0"><col class="c1"><col class="c2"><col class="c3"><col class="c4"><col></colgroup>
                    <thead>
                        <tr><th></th><th>Nom</th><th class="sorted">Data de modificació<svg width="8" height="5"><path d="M0 0l4 4 4-4" stroke="#999" fill="none"/></svg></th><th>Tipus</th><th>Mida</th><th></th></tr>
                    </thead>
                    <tbody>
                        <tr class="group"><td colspan="6"><div><svg width="11" height="8"><path d="M1 1l5 5 5-5" stroke="#777" fill="none"/></svg>Avui (2)<hr></div></td></tr>
                        <tr><td></td><td><svg class="i16"><use href="#zip"/></svg>cutegirlfiles</td><td>1/2/2024 16:42</td><td>Carpeta comprimi...</td><td>3.919 kB</td><td></td></tr>
                        <tr class="selected"><td></td><td><svg class="i16"><use href="#folder"/></svg>cutegirlfiles</td><td>1/2/2024 16:43</td><td>Carpeta de fitxers</td><td></td><td></td></tr>
                        <tr class="group"><td colspan="6"><div><svg width="11" height="8"><path d="M1 1l5 5 5-5" stroke="#777" fill="none"/></svg>Darrera setmana (7)<hr></div></td></tr>
                        <tr><td></td><td><svg class="i16"><use href="#msi"/></svg>node-v20.11.0-x64</td><td>28/1/2024 12:49</td><td>Paquete de Windo...</td><td>26.012 kB</td><td></td></tr>
                        <tr><td></td><td><svg class="i16"><use href="#pdf"/></svg>Teaching Digital Natives-in press6.pdf - OETManhatta...</td><td>27/1/2024 21:22</td><td>Microsoft Edge P...</td><td>1.677 kB</td><td></td></tr>
                        <tr><td></td><td><svg class="i16"><use href="#xls"/></svg>DAM-DAW Registre Sessions Tutoria 2023-24</td><td>26/1/2024 14:51</td><td>Hoja de cálculo d...</td><td>126 kB</td><td></td></tr>
                        <tr><td></td><td><svg class="i16"><use href="#docx"/></svg>informe_24012024 (1)</td><td>24/1/2024 17:21</td><td>Documento de Mi...</td><td>4 kB</td><td></td></tr>
                        <tr><td></td><td><svg class="i16"><use href="#docx"/></svg>informe_24012024</td><td>24/1/2024 17:20</td><td>Documento de Mi...</td><td>4 kB</td><td></td></tr>
                        <tr><td></td><td><svg class="i16"><use href="#png"/></svg>noun-net-5022134</td><td>24/1/2024 16:31</td><td>Fitxer PNG</td><td>59 kB</td><td></td></tr>
                        <tr><td></td><td><svg class="i16"><use href="#pdf"/></svg>FORZA HORIZON 5 DAFO</td><td>22/1/2024 17:50</td><td>Microsoft Edge P...</td><td>50 kB</td><td></td></tr>
                        <tr class="group"><td colspan="6"><div><svg width="11" height="8"><path d="M1 1l5 5 5-5" stroke="#777" fill="none"/></svg>El mes passat (2)<hr></div></td></tr>
                        <tr><td></td><td><svg class="i16"><use href="#xls"/></svg>Calendari 2324</td><td>10/1/2024 18:40</td><td>Hoja de cálculo d...</td><td>64 kB</td><td></td></tr>
                        <tr><td></td><td><svg class="i16"><use href="#unityPkg"/></svg>SimpleWebXR</td><td>9/1/2024 22:01</td><td>Unity package file</td><td>38 kB</td><td></td></tr>
                        <tr class="group"><td colspan="6"><div><svg width="11" height="8"><path d="M1 1l5 5 5-5" stroke="#777" fill="none"/></svg>Fa molt temps (2)<hr></div></td></tr>
                        <tr><td></td><td><svg class="i16"><use href="#unityPkg"/></svg>Install-com.atteneder.gltfast-latest (2)</td><td>11/10/2023 15:40</td><td>Unity package file</td><td>19 kB</td><td></td></tr>
                        <tr><td></td><td><svg class="i16"><use href="#unityPkg"/></svg>Install-com.atteneder.ktx-latest (1)</td><td>3/10/2023 12:38</td><td>Unity package file</td><td>19 kB</td><td></td></tr>
                    </tbody>
                </table>
            </div>
        </div>
        <footer class="ex-status">
            <span>13 elements</span><span>1 element seleccionat</span>
            <div class="views">
                <button class="active" aria-label="Detalls"><svg width="18" height="16"><path d="M3 1h4v4H3zM3 6h4v4H3zM3 11h4v4H3z" fill="#fff"/><path d="M9 3h3M13 3h3M9 8h3M13 8h3M9 13h3M13 13h3" stroke="#888"/><path d="M4 3h2" stroke="#678"/><path d="M4 13h2" stroke="#c33" stroke-width="2"/><path d="M4 8h2" stroke="#37c" stroke-width="2"/></svg></button>
                <button class="thumbs" aria-label="Miniatures"><svg width="14" height="12"><path d="M0 0h14v12H0z" fill="#fff"/><path d="M2 2h10v8H2z" fill="url(#gSky)"/></svg></button>
            </div>
        </footer>
    </div>

    <!-- carpeta arrossegada, cursor i fletxa -->
    <svg class="ghost" width="104" height="104" viewBox="0 0 104 104">
        <defs><linearGradient id="gGhost" x1="0" y1="0" x2="0" y2="1"><stop offset="0" stop-color="#8e9ca4" stop-opacity=".6"/><stop offset="1" stop-color="#7397aa" stop-opacity=".65"/></linearGradient></defs>
        <rect x=".500" y=".500" width="103" height="103" rx="2" fill="url(#gGhost)" stroke="#51798c"/>
        <path d="M21 15h49v8l7 1v43l5 5v18H50L21 60z" fill="#d8bd68"/>
        <path d="M61 28l12 3v63l-15-4z" fill="#dcdfe0"/>
        <path d="M61 36l9 2M61 41l9 2M61 46l9 2M61 51l9 2M61 54l9 2" stroke="#55a0cf"/>
        <path d="M61 58l9 2v11l-9-2z" fill="#3f92c9"/>
        <path d="M61 73l9 2M61 78l9 2M61 83l9 2M60 88l9 2" stroke="#a8adb0"/>
        <path d="M30 17l31 11v45l-3 22-21-7z" fill="#dac57a"/>
        <path d="M39 27l11 7v34l-3 22-9-6z" fill="#cdb566"/>
        <path d="M21 15l18 13v44l-1 23-17-13z" fill="#dccb8c"/>
    </svg>
    <svg class="drag-arrow" width="930" height="426"><path d="M1 1l912 418" stroke="#fff" stroke-width="2"/><path d="M913 412l16 12-20-4z" fill="#fff"/></svg>
    <svg class="nodrop" width="14" height="14"><circle cx="7" cy="7" r="7" fill="#fff"/><circle cx="7" cy="7" r="5" fill="#ddd" stroke="#d9202c" stroke-width="2"/><path d="M3 4l7 7" stroke="#d9202c" stroke-width="2"/><path d="M6 3l5 5M3 6l5 5" stroke="#222"/></svg>

    <div class="taskbar">
        <button class="task" aria-label="Inici"><svg width="16" height="16"><path d="M0 2l7-1v7H0zM8 1l8-1v8H8zM0 9h7v6l-7-1zM8 9h8v7l-8-1z" fill="#fff"/></svg></button>
        <label class="task-search">
            <svg width="18" height="18"><circle cx="11" cy="6" r="5" stroke="#fff" fill="none"/><path d="M7 10l-6 7" stroke="#fff"/></svg>
            <input type="text" placeholder="Escriu aquí per cercar" aria-label="Cercar">
            <svg class="art" width="78" height="36"><path d="M8 24h62l8 8v4H0v-4z" fill="#d8ac7c"/><path d="M0 32h78v4H0z" fill="#b88755"/><path d="M12 12l13-3 11-2 3 18-10 2-14 5z" fill="#e7efe9"/><path d="M12 12l3 20 14-4 10-3v3l-23 7z" fill="#2f9e46"/><path d="M25 9l3 18M15 16l8-2M16 20l8-2M29 12l6-1" stroke="#9db4a8"/><path d="M29 18l8-13 4 2-9 13z" fill="#f6a623"/><path d="M37 5l2-3 3 2-1 3z" fill="#e5483f"/><rect x="48" y="3" width="20" height="28" rx="8" fill="url(#gPack)"/><path d="M54 4c0-5 8-5 8 0" stroke="#1d8ff0" stroke-width="2" fill="none"/><rect x="51" y="17" width="14" height="11" rx="3" fill="#2377ee" stroke="#68c0ff"/></svg>
        </label>
        <button class="task" aria-label="Cortana"><svg width="18" height="18"><circle cx="9" cy="9" r="7" stroke="#fff" stroke-width="2" fill="none"/></svg></button>
        <button class="task view" aria-label="Vista de tasques"><svg width="18" height="18"><path d="M1.500 1v3h10V1M1.500 17v-3h10v3M1.500 6.500h10v5h-10zM15.500 1v2M15.500 5v12M14 7.500h3" stroke="#fff" fill="none"/></svg></button>
        <button class="task app" aria-label="XAMPP"><svg width="24" height="24"><rect width="24" height="24" rx="3" fill="#f47b20"/><path d="M7 6c3-2 4 2 5 2s3-4 5-2c3 3-1 5-1 6s4 4 1 6-4-2-5-2-3 4-5 2c-3-2 1-5 1-6S4 8 7 6z" fill="none" stroke="#fff" stroke-width="3"/></svg></button>
        <button class="task app" aria-label="Code"><svg width="24" height="24"><path d="M17 0l7 3v18l-7 3L1 9l2-2 14 10V7L3 17l-2-2z" fill="#1c8fd8"/><path d="M17 0l7 3v18l-7 3z" fill="#34a9f2"/></svg></button>
        <button class="task app current" aria-label="Explorador"><svg width="24" height="24"><use href="#explorer"/></svg></button>
        <button class="task app" aria-label="Chrome"><svg width="24" height="24"><use href="#chrome"/></svg></button>
        <button class="task app open" aria-label="Unity"><svg width="24" height="24"><use href="#unity"/></svg></button>
        <button class="task app open" aria-label="Photoshop"><span class="ps">Ps</span></button>
        <button class="task app open" aria-label="Chrome perfil"><svg width="26" height="24"><use href="#chrome" width="24" height="24"/><circle cx="19" cy="16" r="6" fill="#18120f"/><path d="M14 18l6-2 3 4-4 4h-4z" fill="#e9c0a4"/></svg></button>
        <div class="tray">
            <svg width="24" height="16"><path d="M5 16a5 5 0 0 1 0-10C7-1 16-1 17 6c8-1 9 10 1 10z" fill="#9cc0f2"/><path d="M6 16c0-9 12-9 13-1z" fill="#d9e8fc"/></svg>
            <span class="weather">18°C&nbsp; Nublado</span>
            <svg class="up" width="12" height="8"><path d="M1 7l5-5 5 5" stroke="#fff" fill="none"/></svg>
            <svg width="17" height="14"><path d="M5.500 4.500h10v8h-10z" stroke="#fff" fill="none"/><path d="M7 6h7v5H7zM1 2h5v4H1z" fill="#fff"/><path d="M2 0v2M5 0v2M3 6v4h2" stroke="#fff" fill="none"/></svg>
            <svg width="14" height="14"><path d="M1 13C1 6 6 1 13 1M4 13c0-5 4-9 9-9M7 13c0-3 3-6 6-6" stroke="#ccc" fill="none"/><circle cx="11" cy="12" r="2" fill="#fff"/></svg>
            <svg width="15" height="14"><path d="M1 5h2l4-4v12L3 9H1zM10 5l4 4M14 5l-4 4" stroke="#fff" fill="none"/></svg>
            <span class="lang">CAT</span>
            <div class="clock"><span>16:43</span><span>1/2/2024</span></div>
            <svg width="16" height="16"><path d="M0 0h16v13h-5l-3 3v-3H0z" fill="#fff"/><path d="M3 4h10M3 7h10M3 10h7" stroke="#222"/></svg>
        </div>
    </div>
</body>
</html>
```

FILE: styles.css
```css
*{
    box-sizing: border-box;
}
body{
    margin: 0;
    height: 100vh;
    display: flex;
    flex-direction: column;
    overflow: hidden;
    background: #191919;
    font-family: "Noto Sans", "Open Sans", sans-serif;
    font-size: 11px;
    color: #fff;
}
button, input, select{
    font: inherit;
    color: inherit;
    background: none;
    border: 0;
    padding: 0;
    margin: 0;
    outline: none;
}
a{
    color: inherit;
    text-decoration: none;
}
ul, p, h2{
    margin: 0;
    padding: 0;
    list-style: none;
    font-size: inherit;
    font-weight: normal;
}
svg{
    flex: none;
}
.sprite{
    position: absolute;
    width: 0;
    height: 0;
}
.i16{
    width: 16px;
    height: 16px;
}
.tri{
    width: 8px;
    height: 6px;
}
.lock{
    width: 10px;
    height: 12px;
}
.dots{
    width: 4px;
    height: 12px;
}
.pop{
    width: 12px;
    height: 12px;
}

/* unity */
.unity{
    flex: 1;
    min-height: 0;
    display: flex;
    flex-direction: column;
    font-family: Inter, "Liberation Sans", sans-serif;
    font-size: 12px;
    color: #c4c4c4;
}
.titlebar, .menubar{
    background: #fff;
    font-family: "Noto Sans", "Open Sans", sans-serif;
    font-size: 11px;
    display: flex;
    align-items: center;
}
.titlebar{
    height: 23px;
    padding-left: 2px;
    gap: 5px;
    color: #999;
}
.win-buttons{
    margin-left: auto;
    display: flex;
    align-self: stretch;
}
.win-buttons button{
    width: 45px;
    display: flex;
    align-items: center;
    justify-content: center;
}
.titlebar .win-buttons{
    padding: 0 3px 3px 0;
}
.menubar{
    height: 20px;
    padding-left: 7px;
    gap: 15px;
    color: #555;
    border-bottom: 2px solid #f0f0f0;
}
.main-toolbar{
    height: 30px;
    flex: none;
    display: grid;
    grid-template-columns: 1fr auto 1fr;
    padding: 6px 8px;
}
.tool-group{
    display: flex;
    gap: 6px;
}
.ubtn{
    height: 18px;
    background: #383838;
    display: flex;
    align-items: center;
    justify-content: center;
    gap: 1px;
}
.account{
    width: 56px;
    gap: 6px;
}
.cloud{
    width: 30px;
}
.hex{
    height: 20px;
    margin-left: -1px;
}
.store{
    width: 101px;
}
.play{
    gap: 1px;
}
.play .ubtn{
    width: 31px;
}
.play .step{
    background: #2a2a2a;
}
.end{
    justify-content: flex-end;
    padding-right: 2px;
}
.uselect{
    width: 78px;
    height: 18px;
    padding: 0 3px;
    appearance: none;
    background: conic-gradient(from -37deg at 50% 100%, #c4c4c4 74deg, transparent 0) right 3px center / 8px 6px no-repeat #383838;
}
.docks{
    flex: 1;
    min-height: 0;
    display: grid;
    grid-template-columns: 875fr 611fr 430fr;
    gap: 2px;
}
.dock-col{
    display: flex;
    flex-direction: column;
    gap: 2px;
    min-width: 0;
    min-height: 0;
}
.dock{
    background: #383838;
    display: flex;
    flex-direction: column;
    min-height: 0;
}
.scene, .hierarchy{
    flex: 558;
}
.console, .project{
    flex: 384;
}
.inspector{
    flex: 1;
}
.tabs{
    height: 19px;
    flex: none;
    background: #282828;
    display: flex;
    border-radius: 3px 3px 0 0;
}
.tab{
    display: flex;
    align-items: center;
    gap: 5px;
    padding: 0 18px 0 8px;
    background: #3c3c3c;
    border-radius: 3px 3px 0 0;
}
.tab.narrow{
    width: 90px;
}
.tab-tools{
    margin-left: auto;
    display: flex;
    align-items: center;
    gap: 10px;
    padding-right: 11px;
}
.scene-tools{
    height: 27px;
    flex: none;
    background: #3c3c3c;
    border-bottom: 1px solid #777;
    display: flex;
    align-items: center;
    padding: 0 4px 0 6px;
    gap: 4px;
}
.grip{
    width: 4px;
    height: 16px;
    border: solid #555;
    border-width: 0 1px;
    margin-right: 2px;
}
.grip.far{
    margin: 0 2px 0 6px;
}
.sbtn{
    height: 20px;
    background: #585858;
    border-radius: 2px;
    display: flex;
    align-items: center;
    justify-content: center;
    gap: 3px;
    white-space: nowrap;
}
.sbtn.on{
    background: #46607c;
    color: #fff;
}
.w75{
    width: 75px;
    gap: 2px;
}
.w72{
    width: 72px;
    gap: 1px;
}
.w36{
    width: 36px;
    gap: 4px;
}
.w32{
    width: 32px;
}
.bold{
    font-weight: bold;
    font-size: 11px;
}
.split{
    display: flex;
    gap: 1px;
}
.split .sbtn{
    width: 22px;
}
.split .thin{
    width: 14px;
}
.dim{
    opacity: .55;
}
.dimmed{
    background: #4a4a4a;
}
.scene-right{
    margin-left: auto;
    display: flex;
    align-items: center;
    gap: 4px;
}
.scene-view{
    flex: 1;
    position: relative;
    background: #474747;
    overflow: hidden;
}
.grid-lines{
    display: block;
}
.tool-palette{
    position: absolute;
    left: 2px;
    top: 1px;
    width: 43px;
    padding: 6px 3px 4px;
    background: #111;
    border-radius: 4px;
    display: flex;
    flex-direction: column;
    gap: 1px;
}
.tool-palette i{
    width: 16px;
    height: 4px;
    margin: 0 auto 8px;
    border: solid #777;
    border-width: 1px 0;
}
.tool-palette button{
    height: 20px;
    background: #585858;
}
.tool-palette .on{
    background: #46607c;
}
.console-tools{
    height: 20px;
    padding-left: 4px;
    background: #3c3c3c;
    border-bottom: 1px solid #222;
    display: flex;
}
.console-list{
    flex: 241;
    border-bottom: 1px solid #222;
}
.console-detail{
    flex: 103;
}
.search-row{
    height: 20px;
    flex: none;
    background: #3c3c3c;
    display: flex;
    align-items: center;
    justify-content: space-between;
    padding: 0 4px 0 7px;
}
.plus{
    display: flex;
    align-items: center;
    gap: 5px;
}
.usearch{
    width: 325px;
    height: 15px;
    background: #2a2a2a;
    border: 1px solid #1c1c1c;
    border-radius: 3px;
    display: flex;
    align-items: center;
    gap: 4px;
    padding: 0 1px 0 4px;
    color: #777;
}
.usearch input{
    flex: 1;
    min-width: 0;
    font-size: 11px;
}
.usearch input::placeholder{
    color: #777;
    opacity: 1;
}
.tree-root{
    height: 17px;
    flex: none;
    background: #2a2a2a;
    border-bottom: 1px solid #444;
    display: flex;
    align-items: center;
    gap: 5px;
    padding: 0 10px 0 34px;
    font-size: 13px;
    color: #d2d2d2;
}
.tree-root .dots{
    margin-left: auto;
}
.gray{
    color: #777;
}
.tree-item{
    height: 15px;
    display: flex;
    align-items: center;
    gap: 4px;
    padding-left: 60px;
}
.project-tools{
    height: 21px;
    flex: none;
    display: flex;
    align-items: center;
    gap: 1px;
    background: #232323;
    padding-top: 1px;
}
.project-tools .usearch{
    flex: 1;
    margin-right: 3px;
    height: 16px;
}
.project-tools button{
    width: 25px;
    align-self: stretch;
    background: #3c3c3c;
    display: flex;
    align-items: center;
    justify-content: center;
}
.project-tools .count{
    width: 38px;
    gap: 1px;
}
.project-body{
    flex: 1;
    min-height: 0;
    display: flex;
}
.project-left{
    width: 208px;
    border-right: 1px solid #1c1c1c;
}
.project-right{
    flex: 1;
    background: #333;
    display: flex;
    flex-direction: column;
    font-size: 13px;
}
.crumb{
    height: 21px;
    background: #3e3e3e;
    padding-left: 2px;
    line-height: 21px;
    font-weight: bold;
}
.asset{
    display: flex;
    align-items: center;
    gap: 5px;
    height: 18px;
    padding-left: 17px;
}
.zoombar{
    margin-top: auto;
    height: 21px;
    background: #3f3f3f;
    display: flex;
    align-items: center;
    justify-content: flex-end;
    padding-right: 16px;
}
.zoombar input{
    width: 56px;
    height: 10px;
    appearance: none;
}
.zoombar input::-webkit-slider-runnable-track{
    height: 2px;
    background: #5e5e5e;
}
.zoombar input::-webkit-slider-thumb{
    appearance: none;
    width: 10px;
    height: 10px;
    margin-top: -4px;
    border-radius: 50%;
    background: #999;
}
.unity-status{
    height: 22px;
    flex: none;
    display: flex;
    align-items: center;
    justify-content: flex-end;
    gap: 12px;
    padding-right: 7px;
}

/* explorer window */
.explorer{
    position: absolute;
    left: 22px;
    top: 142px;
    width: 1074px;
    height: 838px;
    background: #191919;
    border: solid #3a3a3a;
    border-width: 0 1px 1px 0;
    box-shadow: 0 6px 18px rgba(0, 0, 0, .5);
    display: flex;
    flex-direction: column;
}
.ex-title{
    height: 30px;
    background: #000;
    display: flex;
    align-items: center;
    padding-left: 8px;
    gap: 6px;
}
.ex-title .bar{
    width: 1px;
    height: 12px;
    background: #777;
}
.ex-title .first{
    margin-right: 4px;
}
.ex-title .quick{
    margin-right: 2px;
}
.ex-tabs{
    height: 24px;
    background: #000;
    border-bottom: 1px solid #2b2b2b;
    display: flex;
}
.ex-tabs button{
    height: 24px;
    padding: 0 14px 2px;
}
.ex-tabs .file{
    width: 56px;
    padding: 0 0 2px;
    background: #0067b8;
}
.ex-tabs .active{
    width: 50px;
    padding: 0 0 2px;
    background: #202020;
    border: solid #2b2b2b;
    border-width: 1px 1px 0 0;
}
.ex-help{
    margin-left: auto;
    display: flex;
    align-items: center;
    gap: 9px;
    padding-right: 4px;
}
.ex-help button{
    width: 15px;
    height: 15px;
    padding: 0;
    line-height: 15px;
    border-radius: 50%;
    background: #0a6cce;
    font-weight: bold;
}
.ribbon{
    height: 92px;
    background: #202020;
    border-bottom: 1px solid #2e2e2e;
    display: flex;
}
.rgroup{
    display: flex;
    flex-direction: column;
    justify-content: space-between;
    padding: 2px 0 2px 3px;
    background: linear-gradient(#444, #444) right 2px / 1px 72px no-repeat;
}
.rgroup p{
    text-align: center;
    line-height: 14px;
    padding-right: 6px;
    color: #c8c8c8;
}
.g1{
    width: 296px;
}
.g2{
    width: 210px;
}
.g3{
    width: 162px;
}
.g4{
    width: 136px;
}
.g5{
    width: 147px;
}
.ritems{
    display: flex;
}
.big{
    height: 70px;
    padding-top: 6px;
    display: flex;
    flex-direction: column;
    align-items: center;
    line-height: 13px;
    white-space: nowrap;
}
.big > svg{
    margin-bottom: 5px;
}
.big span{
    height: 13px;
}
.b38{
    width: 38px;
}
.b44{
    width: 44px;
}
.b50{
    width: 50px;
}
.b52{
    width: 52px;
}
.b54{
    width: 54px;
}
.b56{
    width: 56px;
}
.b74{
    width: 74px;
}
.off{
    color: #a0a0a0;
}
.rt{
    width: 6px;
    height: 4px;
    vertical-align: middle;
}
.rsep{
    width: 1px;
    height: 55px;
    margin: 8px 4px 0 6px;
    background: #4a4a4a;
}
.small-col{
    display: flex;
    flex-direction: column;
    padding: 1px 0 0 4px;
}
.small-col button{
    height: 22px;
    display: flex;
    align-items: center;
    gap: 2px;
    white-space: nowrap;
}
.small-col .rt{
    margin-left: 2px;
}
.address-row{
    height: 35px;
    display: flex;
    align-items: center;
    padding: 0 12px;
}
.arrows{
    width: 94px;
    display: flex;
    align-items: center;
}
.arrows button{
    width: 14px;
    height: 22px;
    display: flex;
    align-items: center;
    margin-right: 16px;
}
.arrows .fwd{
    margin-right: 12px;
}
.arrows .mini{
    width: 8px;
    margin-right: 11px;
}
.arrows .up{
    width: 12px;
    margin-right: 0;
}
.address{
    width: 514px;
    height: 22px;
    margin-right: 13px;
    border: 1px solid #535353;
    display: flex;
    align-items: center;
    gap: 9px;
    padding: 0 1px 2px 2px;
}
.chev{
    color: #999;
    font-size: 14px;
    line-height: 14px;
}
.address-end{
    margin-left: auto;
    display: flex;
    align-items: center;
    gap: 6px;
}
.ex-search{
    flex: 1;
    height: 22px;
    border: 1px solid #535353;
    display: flex;
    align-items: center;
    padding: 0 8px 2px;
}
.ex-search input{
    flex: 1;
}
.ex-search input::placeholder{
    color: #7d7d7d;
    opacity: 1;
}
.ex-body{
    flex: 1;
    min-height: 0;
    display: flex;
}
.nav-pane{
    width: 240px;
    border-right: 2px solid #2b2b2b;
    padding-top: 15px;
}
.nav-pane ul{
    margin-bottom: 8px;
}
.nav-pane li{
    height: 24px;
    margin: 0 2px 0 1px;
    padding: 0 2px 0 31px;
    display: flex;
    align-items: center;
    gap: 5px;
}
.nav-pane .top{
    padding-left: 23px;
}
.nav-pane .current{
    background: linear-gradient(#333, #333) center / 100% 22px no-repeat;
}
.pin{
    width: 10px;
    height: 10px;
    margin-left: auto;
}
.list-pane{
    flex: 1;
    background: #202020;
    padding-right: 8px;
}
.files{
    width: 100%;
    table-layout: fixed;
    border-collapse: separate;
    border-spacing: 0;
}
.c0{
    width: 16px;
}
.c1{
    width: 327px;
}
.c2{
    width: 144px;
}
.c3{
    width: 120px;
}
.c4{
    width: 80px;
}
.files th{
    height: 27px;
    padding: 0 0 3px 6px;
    text-align: left;
    font-weight: normal;
    color: #dedede;
    border-right: 1px solid #636363;
}
.files th:first-child, .files th:last-child{
    border: 0;
}
.files th:nth-child(2){
    padding-left: 2px;
}
.sorted{
    position: relative;
}
.sorted svg{
    position: absolute;
    top: 1px;
    left: 68px;
}
.files td{
    height: 21px;
    padding: 0 0 0 6px;
    line-height: 16px;
    white-space: nowrap;
    color: #dedede;
}
.files td:nth-child(2){
    padding-left: 3px;
    color: #fff;
}
.files td:nth-child(2) svg{
    float: left;
    margin-right: 4px;
}
.files td:nth-child(5){
    text-align: right;
    padding: 0 3px 0 0;
    border-right: 4px solid transparent;
    background-clip: padding-box;
}
.files .group td{
    height: 32px;
    padding: 0 0 0 7px;
}
.group div{
    display: flex;
    align-items: center;
    gap: 4px;
    font-size: 14px;
}
.group hr{
    flex: 1;
    height: 1px;
    margin: 0 0 0 4px;
    border: 0;
    background: #303030;
}
.selected td:nth-child(n+2):nth-child(-n+5){
    background-color: #777;
}
.ex-status{
    height: 23px;
    background: #333;
    display: flex;
    align-items: center;
    padding: 1px 6px 0 14px;
    color: #dedede;
}
.ex-status span{
    border-right: 1px solid #fff;
    line-height: 12px;
    padding-right: 10px;
    margin-right: 10px;
}
.views{
    margin-left: auto;
    display: flex;
    gap: 2px;
}
.views button{
    width: 22px;
    height: 22px;
    display: flex;
    align-items: center;
    justify-content: center;
}
.views .thumbs{
    width: 18px;
}
.views .active{
    background: #666;
    border: 1px solid #888;
}

/* drag overlay */
.ghost{
    position: absolute;
    left: 1021px;
    top: 602px;
    opacity: .95;
}
.drag-arrow{
    position: absolute;
    left: 373px;
    top: 415px;
}
.nodrop{
    position: absolute;
    left: 1087px;
    top: 711px;
}

/* taskbar */
.taskbar{
    height: 40px;
    flex: none;
    background: #1e1e1e;
    display: flex;
    font-size: 12px;
}
.task-search{
    width: 288px;
    background: #333;
    border: 1px solid #5c5c5c;
    display: flex;
    align-items: center;
    padding-left: 10px;
    gap: 11px;
    font-size: 14px;
}
.task-search input{
    flex: 1;
    min-width: 0;
}
.task-search input::placeholder{
    color: #d0d0d0;
    opacity: 1;
}
.art{
    align-self: flex-end;
}
.task{
    width: 48px;
    display: flex;
    align-items: center;
    justify-content: center;
}
.view{
    margin-right: 3px;
}
.app{
    margin-right: 1px;
}
.current.task{
    background: #454545;
    box-shadow: inset 0 -2px #76b9ed;
}
.open{
    background: linear-gradient(#76b9ed, #76b9ed) center bottom / 40px 2px no-repeat;
}
.ps{
    width: 24px;
    height: 24px;
    background: #001e5b;
    border: 2px solid #8fc3f5;
    color: #8fc3f5;
    font-weight: bold;
    line-height: 19px;
}
.tray{
    margin-left: auto;
    display: flex;
    align-items: center;
    gap: 8px;
    padding-right: 25px;
}
.weather{
    font-size: 14px;
}
.tray .up{
    margin: 0 1px 0 16px;
}
.lang{
    margin-left: 4px;
}
.clock{
    width: 64px;
    margin-right: 4px;
    font-size: 11px;
    text-align: center;
    display: flex;
    flex-direction: column;
    line-height: 18px;
}
```
